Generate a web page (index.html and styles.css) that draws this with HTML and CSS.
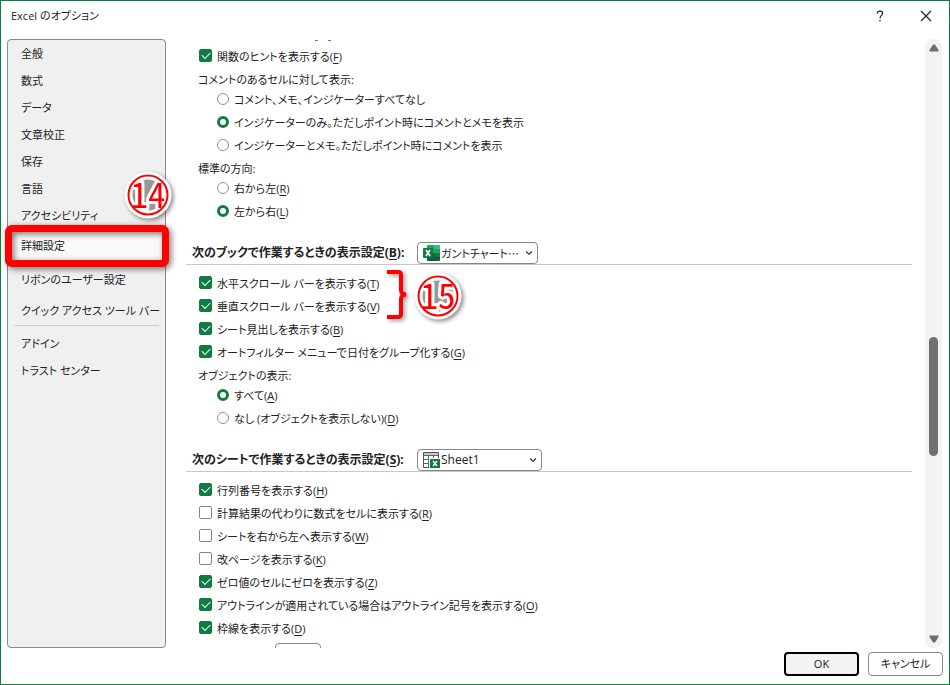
FILE: index.html
```html
<!DOCTYPE html>
<html lang="ja">
<head>
<meta charset="utf-8">
<title>Excel のオプション</title>
<link rel="stylesheet" href="styles.css">
</head>
<body>
<div class="dialog">
  <header class="titlebar">
    <h1 class="title">Excel のオプション</h1>
    <button class="caption-btn" type="button" aria-label="ヘルプ">
      <svg width="14" height="14" viewBox="0 0 14 14"><path d="M4.200 4.400C4.200 2.900 5.300 2.200 6.900 2.200S9.600 3 9.600 4.400C9.600 6.400 7 6.600 7 9.400M7 11V12.600"/></svg>
    </button>
    <button class="caption-btn" type="button" aria-label="閉じる">
      <svg width="14" height="14" viewBox="0 0 14 14"><path d="M2 2L12 12M12 2L2 12"/></svg>
    </button>
  </header>

  <div class="body">
    <nav class="sidebar">
      <ul class="nav">
        <li><a href="#">全般</a></li>
        <li><a href="#">数式</a></li>
        <li><a href="#">データ</a></li>
        <li><a href="#">文章校正</a></li>
        <li><a href="#">保存</a></li>
        <li><a href="#">言語</a></li>
        <li><a href="#">アクセシビリティ</a></li>
        <li class="selected tall"><a href="#">詳細設定</a><span class="frame"></span>
          <svg class="badge badge-nav" width="48" height="48" viewBox="0 0 48 48"><circle class="disc" cx="24" cy="24" r="23.500"/><circle class="core" cx="24" cy="24" r="15.500"/><text x="24" y="37">14</text><circle class="ring" cx="24" cy="24" r="19.500"/></svg>
        </li>
        <li class="tall"><a href="#">リボンのユーザー設定</a></li>
        <li><a href="#">クイック アクセス ツール バー</a></li>
        <li class="group"><a href="#">アドイン</a></li>
        <li><a href="#">トラスト センター</a></li>
      </ul>
    </nav>

    <main class="content">
      <div class="cut-top"><i></i><i></i></div>
      <label class="row"><input type="checkbox" checked><span>関数のヒントを表示する(<u>F</u>)</span></label>
      <p class="sub">コメントのあるセルに対して表示:</p>
      <label class="row indent"><input type="radio" name="comment"><span>コメント、メモ、インジケーターすべてなし</span></label>
      <label class="row indent"><input type="radio" name="comment" checked><span>インジケーターのみ。ただしポイント時にコメントとメモを表示</span></label>
      <label class="row indent"><input type="radio" name="comment"><span>インジケーターとメモ。ただしポイント時にコメントを表示</span></label>
      <p class="sub">標準の方向:</p>
      <label class="row indent"><input type="radio" name="dir"><span>右から左(<u>R</u>)</span></label>
      <label class="row indent"><input type="radio" name="dir" checked><span>左から右(<u>L</u>)</span></label>

      <div class="heading">
        <label class="heading-text" for="book">次のブックで作業するときの表示設定(<u>B</u>):</label>
        <div class="combo combo-book">
          <svg class="combo-icon" width="17" height="16" viewBox="0 0 17 16"><path fill="#21a366" d="M5 0h11q1 0 1 1v7H4V1q0-1 1-1z"/><path fill="#33c481" d="M11 0h5q1 0 1 1v3h-6z"/><path fill="#107c41" d="M11 8h6v4h-6z"/><path fill="#185c37" d="M4 8h7v4h6v3q0 1-1 1H5q-1 0-1-1z"/><rect fill="#107c41" y="3" width="10" height="10" rx="1"/><path stroke="#fff" stroke-width="1.600" d="M3 5L7 11M7 5L3 11"/></svg>
          <select id="book"><option>ガントチャート…</option></select>
          <svg class="chevron" width="8" height="6" viewBox="0 0 8 6"><path d="M1 1.500L4 4.200L7 1.500"/></svg>
        </div>
      </div>
      <div class="pair">
        <label class="row"><input type="checkbox" checked><span>水平スクロール バーを表示する(<u>T</u>)</span></label>
        <label class="row"><input type="checkbox" checked><span>垂直スクロール バーを表示する(<u>V</u>)</span></label>
        <svg class="brace" width="24" height="52" viewBox="0 0 24 52"><path d="M1 3H12Q15 3 15 6V21Q15 25 20 25.500Q15 26 15 30V45Q15 48 12 48H1"/></svg>
        <svg class="badge badge-pair" width="48" height="48" viewBox="0 0 48 48"><circle class="disc" cx="24" cy="24" r="23.500"/><circle class="core" cx="24" cy="24" r="15.500"/><text x="24" y="37">15</text><circle class="ring" cx="24" cy="24" r="19.500"/></svg>
      </div>
      <label class="row"><input type="checkbox" checked><span>シート見出しを表示する(<u>B</u>)</span></label>
      <label class="row"><input type="checkbox" checked><span>オートフィルター メニューで日付をグループ化する(<u>G</u>)</span></label>
      <p class="sub">オブジェクトの表示:</p>
      <label class="row indent"><input type="radio" name="obj" checked><span>すべて(<u>A</u>)</span></label>
      <label class="row indent"><input type="radio" name="obj"><span>なし (オブジェクトを表示しない)(<u>D</u>)</span></label>

      <div class="heading">
        <label class="heading-text" for="sheet">次のシートで作業するときの表示設定(<u>S</u>):</label>
        <div class="combo combo-sheet">
          <svg class="combo-icon" width="17" height="16" viewBox="0 0 17 16"><path fill="#fff" stroke="#555" d="M.5 .5h15v15H.5z"/><path fill="#c8c8c8" d="M1 1h14v2H1z"/><path stroke="#666" d="M1 3.500H15M1 7.500H15M1 11.500H8M5.500 3V15M10.500 3V8"/><path fill="#fff" d="M6 6h11v10H6z"/><path fill="#107c41" d="M7 7h10v9H7z"/><path stroke="#fff" stroke-width="1.400" d="M10 9L14 14M14 9L10 14"/></svg>
          <select id="sheet"><option>Sheet1</option></select>
          <svg class="chevron" width="8" height="6" viewBox="0 0 8 6"><path d="M1 1.500L4 4.200L7 1.500"/></svg>
        </div>
      </div>
      <label class="row"><input type="checkbox" checked><span>行列番号を表示する(<u>H</u>)</span></label>
      <label class="row"><input type="checkbox"><span>計算結果の代わりに数式をセルに表示する(<u>R</u>)</span></label>
      <label class="row"><input type="checkbox"><span>シートを右から左へ表示する(<u>W</u>)</span></label>
      <label class="row"><input type="checkbox"><span>改ページを表示する(<u>K</u>)</span></label>
      <label class="row"><input type="checkbox" checked><span>ゼロ値のセルにゼロを表示する(<u>Z</u>)</span></label>
      <label class="row"><input type="checkbox" checked><span>アウトラインが適用されている場合はアウトライン記号を表示する(<u>O</u>)</span></label>
      <label class="row"><input type="checkbox" checked><span>枠線を表示する(<u>D</u>)</span></label>
      <button class="color-btn" type="button" aria-label="枠線の色"></button>
    </main>

    <div class="scrollbar">
      <svg width="10" height="8" viewBox="0 0 10 8"><path d="M4 .5h2L9.500 6v1.500H.5V6z"/></svg>
      <div class="track"><div class="thumb"></div></div>
      <svg width="10" height="8" viewBox="0 0 10 8"><path d="M.5 .5h9V2L6 7.500H4L.5 2z"/></svg>
    </div>
  </div>

  <footer class="footer">
    <button class="btn primary" type="button">OK</button>
    <button class="btn" type="button">キャンセル</button>
  </footer>
</div>
</body>
</html>
```

FILE: styles.css
```css
* { box-sizing: border-box; }

body {
  margin: 0;
  font: 11px/20px "Open Sans", "Noto Sans CJK JP", sans-serif;
  font-feature-settings: "palt";
  color: #222;
}

button, select, input { font: inherit; font-feature-settings: inherit; color: inherit; margin: 0; }
ul, p, h1 { margin: 0; padding: 0; }

.dialog {
  display: flex;
  flex-direction: column;
  height: 100vh;
  border: 1px solid #107c41;
  background: #fff;
}

.titlebar { display: flex; align-items: center; height: 30px; padding-left: 10px; }
.title { flex: 1; font-size: 11px; font-weight: 400; }
.caption-btn {
  display: grid;
  place-items: center;
  width: 46px;
  height: 30px;
  padding: 0;
  border: 0;
  background: none;
}
.caption-btn path { fill: none; stroke: #222; stroke-width: 1.2; }

.body { display: flex; flex: 1; min-height: 0; padding: 8px 7px 0 6px; }

.sidebar {
  width: 159px;
  border: 1px solid #8a8a8a;
  border-radius: 4px;
  background: #f0f0f0;
}
.nav { list-style: none; }
.nav li { display: flex; align-items: center; height: 27px; padding-left: 13px; }
.nav .tall { height: 34px; }
.nav a { color: inherit; text-decoration: none; white-space: nowrap; }
.nav .selected { position: relative; background: #fafafa; }
.nav .group { position: relative; margin-top: 6px; }
.nav .group::before {
  content: "";
  position: absolute;
  top: -5px;
  left: 6px;
  right: 6px;
  border-top: 1px solid #d0d0d0;
}

.frame {
  position: absolute;
  inset: -4px -4px -4px -3px;
  border: 7px solid #f00;
  border-radius: 7px;
  filter: drop-shadow(2px 2px 3px rgba(0, 0, 0, .55));
}

.badge { position: absolute; overflow: visible; filter: drop-shadow(2px 2px 2px rgba(0, 0, 0, .45)); }
.badge .disc { fill: #fff; }
.badge .core { fill: #999; }
.badge .ring { fill: none; stroke: #f00; stroke-width: 2; }
.badge text {
  fill: #f00;
  stroke: #fff;
  stroke-width: 6px;
  stroke-linejoin: round;
  paint-order: stroke;
  text-anchor: middle;
  font: 35px "Noto Sans CJK JP", sans-serif;
  font-feature-settings: "hwid";
}
.badge-nav { left: 116px; top: -58px; }
.badge-pair { left: 228px; top: 0; }

.content { flex: 1; min-width: 0; overflow: hidden; padding-left: 20px; }

.cut-top { display: flex; gap: 10px; height: 6px; padding-left: 129px; }
.cut-top i { width: 3px; height: 1px; margin-top: 1px; background: #777; }

.row { display: flex; align-items: center; gap: 5px; height: 23px; padding-left: 13px; white-space: nowrap; }
.indent { padding-left: 31px; }
.sub { height: 20px; padding-left: 12px; line-height: 23px; }
u { text-underline-offset: 2px; }

input { appearance: none; flex: none; }
.row input { margin-bottom: 2px; }
input[type="checkbox"] { width: 13px; height: 13px; border: 1px solid #868686; border-radius: 2px; background: #fff; }
input[type="checkbox"]:checked { display: grid; place-items: center; border-color: #107c41; background: #107c41; }
input[type="checkbox"]:checked::before {
  content: "";
  width: 7px;
  height: 4px;
  margin-bottom: 2px;
  border: solid #fff;
  border-width: 0 0 1px 1px;
  transform: rotate(-45deg);
}
input[type="radio"] { width: 12px; height: 12px; border: 1px solid #919191; border-radius: 50%; background: #fff; }
input[type="radio"]:checked { border: 3px solid #107c41; }

.heading {
  display: flex;
  align-items: center;
  height: 24px;
  margin: 18px 13px 7px 0;
  padding-left: 6px;
  border-bottom: 1px solid #c8c8c8;
}
.heading-text { width: 225px; font-size: 12px; font-weight: 700; white-space: nowrap; }

.combo {
  display: flex;
  align-items: center;
  height: 22px;
  padding: 0 4px 0 5px;
  border: 1px solid #868686;
  border-radius: 4px;
  font-size: 12px;
}
.combo-book { width: 121px; font-size: 11px; font-family: "Noto Sans CJK JP", sans-serif; }
.combo-sheet { width: 125px; }
.combo select { appearance: none; flex: 1; min-width: 0; height: 20px; padding: 0 0 0 1px; border: 0; background: none; }
.combo-icon, .chevron { flex: none; }
.chevron path { fill: none; stroke: #333; stroke-width: 1.2; }

.pair { position: relative; }
.brace { position: absolute; left: 200px; top: -3px; filter: drop-shadow(2px 2px 2px rgba(0, 0, 0, .4)); }
.brace path { fill: none; stroke: #f00; stroke-width: 4; }

.color-btn {
  display: block;
  width: 46px;
  height: 22px;
  margin: 3px 0 0 89px;
  border: 1px solid #868686;
  border-radius: 4px;
  background: #fff;
}

.scrollbar {
  display: flex;
  flex-direction: column;
  align-items: center;
  width: 17px;
  padding: 5px 0;
  border-radius: 8px;
  background: #f3f3f3;
}
.scrollbar svg { fill: #6e6e6e; flex: none; }
.track { flex: 1; display: flex; align-items: flex-start; padding-top: 285px; }
.thumb { width: 9px; height: 119px; border-radius: 5px; background: #707070; }

.footer { display: flex; justify-content: flex-end; gap: 9px; padding: 4px 6px 8px; }
.btn {
  width: 75px;
  height: 24px;
  padding: 0;
  border: 1px solid #868686;
  border-radius: 4px;
  background: #fff;
  line-height: 20px;
}
.primary { border: 2px solid #000; background: #f3f3f3; }
```
